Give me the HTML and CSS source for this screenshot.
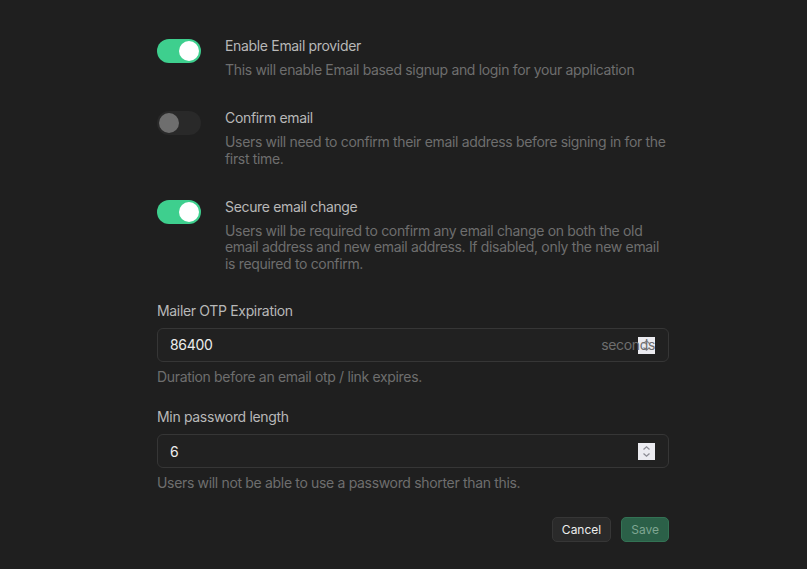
FILE: index.html
```html
<!DOCTYPE html>
<html lang="en">
<head>
<meta charset="utf-8">
<link rel="stylesheet" href="styles.css">
</head>
<body>
<div class="page">
  <form class="form">
    <div class="toggle-row">
      <span class="switch on"><span class="knob"></span></span>
      <div class="toggle-text">
        <div class="title">Enable Email provider</div>
        <div class="desc">This will enable Email based signup and login for your application</div>
      </div>
    </div>
    <div class="toggle-row">
      <span class="switch off"><span class="knob"></span></span>
      <div class="toggle-text">
        <div class="title">Confirm email</div>
        <div class="desc">Users will need to confirm their email address before signing in for the first time.</div>
      </div>
    </div>
    <div class="toggle-row">
      <span class="switch on"><span class="knob"></span></span>
      <div class="toggle-text">
        <div class="title">Secure email change</div>
        <div class="desc">Users will be required to confirm any email change on both the old email address and new email address. If disabled, only the new email is required to confirm.</div>
      </div>
    </div>
    <div class="field first-field">
      <label class="label">Mailer OTP Expiration</label>
      <div class="input-wrap">
        <input class="input" type="number" value="86400">
        <span class="spin"><svg viewBox="0 0 17 17" width="17" height="17"><path d="M5.5 6.5 L8.5 3.8 L11.5 6.5 M5.5 10.5 L8.5 13.2 L11.5 10.5" fill="none" stroke="#8c8c94" stroke-width="1.3"/></svg></span>
        <span class="suffix">seconds</span>
      </div>
      <div class="desc help">Duration before an email otp / link expires.</div>
    </div>
    <div class="field">
      <label class="label">Min password length</label>
      <div class="input-wrap">
        <input class="input" type="number" value="6">
        <span class="spin"><svg viewBox="0 0 17 17" width="17" height="17"><path d="M5.5 6.5 L8.5 3.8 L11.5 6.5 M5.5 10.5 L8.5 13.2 L11.5 10.5" fill="none" stroke="#8c8c94" stroke-width="1.3"/></svg></span>
      </div>
      <div class="desc help">Users will not be able to use a password shorter than this.</div>
    </div>
    <div class="actions">
      <button type="button" class="btn cancel">Cancel</button>
      <button type="button" class="btn save">Save</button>
    </div>
  </form>
</div>
</body>
</html>
```
FILE: styles.css
```css
html, body {
  margin: 0;
  padding: 0;
  background: #1f1f1f;
  height: 100%;
}
body {
  font-family: Inter, "Noto Sans", sans-serif;
  letter-spacing: -0.33px;
  color: #ededed;
}
.page {
  padding: 36px 0 0 157px;
}
.form {
  width: 512px;
  display: flex;
  flex-direction: column;
}
.toggle-row {
  display: flex;
  gap: 24px;
  margin-bottom: 29.5px;
}
.switch {
  flex: none;
  width: 44px;
  height: 24px;
  margin-top: 3px;
  border-radius: 12px;
  position: relative;
  box-sizing: border-box;
}
.switch.on {
  background: #3ecf8e;
}
.switch.off {
  background: #292929;
}
.knob {
  position: absolute;
  top: 2px;
  width: 20px;
  height: 20px;
  border-radius: 50%;
}
.switch.on .knob {
  left: 22px;
  background: #ffffff;
}
.switch.off .knob {
  left: 2px;
  background: #6e6e6e;
}
.title {
  font-size: 14px;
  line-height: 20px;
  color: #b8b8b8;
  margin-bottom: 6px;
}
.desc {
  font-size: 14px;
  line-height: 16.5px;
  color: #6e6e6e;
}
.field {
  display: flex;
  flex-direction: column;
  margin-bottom: 22px;
}
.first-field {
  margin-top: -1px;
}
.label {
  font-size: 14px;
  line-height: 20px;
  color: #b8b8b8;
  margin-bottom: 7px;
}
.input-wrap {
  position: relative;
  height: 34px;
  box-sizing: border-box;
  border: 1px solid #363636;
  border-radius: 6px;
  background: #212121;
  margin-bottom: 7px;
}
.suffix {
  position: absolute;
  right: 13px;
  top: 0;
  line-height: 32px;
  font-size: 14px;
  color: #6e6e6e;
}
.input {
  position: relative;
  width: 100%;
  height: 32px;
  box-sizing: border-box;
  border: 0;
  outline: none;
  background: transparent;
  padding: 0 13px 0 12px;
  font-family: inherit;
  letter-spacing: inherit;
  font-size: 14px;
  color: #ededed;
  -moz-appearance: textfield;
  appearance: textfield;
}
.input::-webkit-inner-spin-button,
.input::-webkit-outer-spin-button {
  -webkit-appearance: none;
  margin: 0;
}
.spin {
  position: absolute;
  right: 13px;
  top: 8px;
  width: 17px;
  height: 17px;
  background: #ebebf0;
  display: block;
}
.spin svg {
  display: block;
}
.actions {
  display: flex;
  justify-content: flex-end;
  gap: 10px;
  margin-top: 3px;
}
.btn {
  height: 25px;
  padding: 0 9px;
  border-radius: 5px;
  font-family: inherit;
  letter-spacing: 0;
  font-size: 12px;
  box-sizing: border-box;
}
.cancel {
  background: #2a2a2a;
  border: 1px solid #363636;
  color: #ededed;
}
.save {
  background: #2b6048;
  border: 1px solid #337254;
  color: #7fa692;
}
```
